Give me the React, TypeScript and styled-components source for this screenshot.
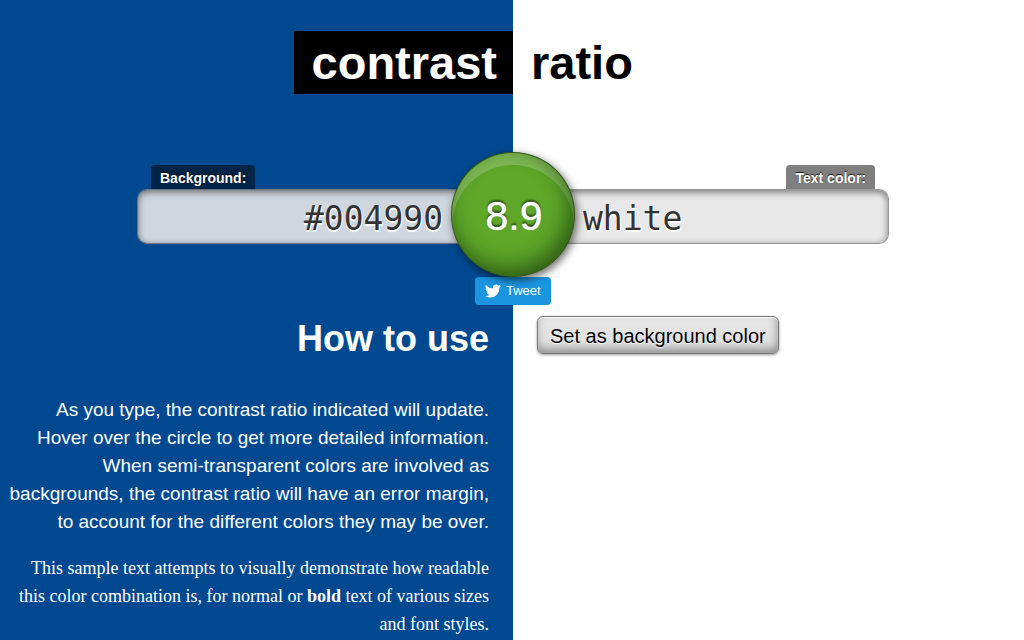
import React, { useState } from 'react';
import styled, { createGlobalStyle } from 'styled-components';

const GlobalStyle = createGlobalStyle`
  *, *::before, *::after { box-sizing: border-box; }
  body {
    margin: 0;
    font-family: "Liberation Sans", Arial, sans-serif;
    font-size: 19px;
    line-height: 28px;
  }
`;

const Page = styled.div`
  min-height: 100vh;
  padding-top: 31px;
  color: white;
  background: linear-gradient(to right, #004990 calc(50% + 1px), white 0);
`;

const band = `
  display: grid;
  grid-template-columns: calc(50% + 1px) 1fr;
`;

const Title = styled.h1`
  ${band}
  margin: 0 0 71px;
  font-size: 47px;
  line-height: 63px;
`;

const TitleWord = styled.span<{ $dark?: boolean }>`
  justify-self: ${p => (p.$dark ? 'end' : 'start')};
  padding: 0 ${p => (p.$dark ? 16 : 20)}px 0 18px;
  background: ${p => (p.$dark ? 'black' : 'transparent')};
  color: ${p => (p.$dark ? 'white' : 'black')};
`;

const Form = styled.form`
  ${band}
  position: relative;
  margin-bottom: 72px;
`;

const Field = styled.div<{ $side: 'left' | 'right' }>`
  display: flex;
  flex-direction: column;
  align-items: ${p => (p.$side === 'left' ? 'flex-start' : 'flex-end')};
  justify-self: ${p => (p.$side === 'left' ? 'end' : 'start')};
  width: 376px;
  max-width: 100%;
`;

const FieldLabel = styled.label`
  margin: 0 14px;
  padding: 2px 9px 0;
  border-radius: 4px 4px 0 0;
  background: rgba(0, 0, 0, 0.5);
  color: white;
  font-size: 14px;
  font-weight: bold;
  line-height: 22px;
  text-shadow: 0 -1px 1px rgba(0, 0, 0, 0.8);
`;

const ColorInput = styled.input<{ $side: 'left' | 'right' }>`
  width: 100%;
  height: 55px;
  padding: 4px 70px 0;
  border: 1px solid rgba(128, 128, 128, 0.8);
  border-width: ${p => (p.$side === 'left' ? '1px 0 1px 1px' : '1px 1px 1px 0')};
  border-radius: ${p => (p.$side === 'left' ? '10px 0 0 10px' : '0 10px 10px 0')};
  outline: none;
  background: hsla(0, 0%, 90%, 0.9);
  background-clip: padding-box;
  box-shadow: inset 0 2px 7px rgba(0, 0, 0, 0.5);
  color: #333;
  font: 33px "DejaVu Sans Mono", monospace;
  text-align: ${p => (p.$side === 'left' ? 'right' : 'left')};
  text-shadow: 1px 1px 1px white, 0 2px 1px white;
`;

const Ratio = styled.output`
  position: absolute;
  z-index: 2;
  top: -13px;
  left: calc(50% - 61px);
  width: 124px;
  height: 125px;
  padding: 2px 0 0 2px;
  border: 1px solid rgba(0, 0, 0, 0.45);
  border-radius: 50%;
  background: #5ea729;
  box-shadow:
    2px 3px 8px rgba(0, 0, 0, 0.6),
    inset -5px -8px 20px rgba(0, 20, 0, 0.5),
    inset 0 12px 0 rgba(255, 255, 255, 0.2);
  font-size: 41px;
  line-height: 122px;
  text-align: center;
  text-shadow: 0 0 1px white, 0 -2px 2px rgba(0, 0, 0, 0.6);
`;

const TweetLink = styled.a`
  position: absolute;
  z-index: 1;
  top: 112px;
  left: calc(50% - 37px);
  display: flex;
  align-items: center;
  gap: 5px;
  width: 76px;
  height: 28px;
  padding: 0 10px;
  border-radius: 4px;
  background: #1b95e0;
  color: white;
  font-size: 13px;
  text-decoration: none;
`;

const Columns = styled.main`
  ${band}
`;

const Instructions = styled.section`
  padding: 0 24px 0 8px;
  text-align: right;
`;

const Heading = styled.h2`
  margin: 0 0 34px;
  font-size: 36px;
  line-height: 46px;
`;

const Copy = styled.p<{ $serif?: boolean }>`
  margin: 0 0 18px;
  ${p => p.$serif && 'font-family: "Liberation Serif", "Times New Roman", serif; font-size: 18px;'}
  &:last-child { margin-bottom: 0; }
`;

const Actions = styled.section`
  padding-left: 24px;
`;

const SetButton = styled.button`
  height: 38px;
  padding: 2px 12px 0;
  border: 1px solid #777;
  border-radius: 6px;
  background: linear-gradient(#e8e8e8, #dcdcdc);
  box-shadow:
    0 1px 3px rgba(0, 0, 0, 0.4),
    inset 0 1px 1px white,
    inset -1px -4px 8px rgba(0, 0, 0, 0.35);
  color: black;
  font: 20px "Liberation Sans", Arial, sans-serif;
  text-shadow: 0 1px 1px white;
`;

const Bird = () => (
  <svg width="16" height="16" viewBox="0 0 24 24" fill="white" aria-hidden="true">
    <path d="M23.95 4.57a10 10 0 0 1-2.82.77 4.96 4.96 0 0 0 2.16-2.72c-.95.55-2 .95-3.13 1.18a4.92 4.92 0 0 0-8.38 4.48A13.93 13.93 0 0 1 1.64 3.16a4.92 4.92 0 0 0 1.52 6.57 4.9 4.9 0 0 1-2.23-.61v.06a4.92 4.92 0 0 0 3.95 4.83 5 5 0 0 1-2.21.08 4.94 4.94 0 0 0 4.6 3.42A9.87 9.87 0 0 1 0 19.54a13.99 13.99 0 0 0 7.55 2.21c9.05 0 14-7.5 14-13.98 0-.21 0-.42-.02-.63a9.94 9.94 0 0 0 2.42-2.57z" />
  </svg>
);

export default function App() {
  const [background, setBackground] = useState('#004990');
  const [color, setColor] = useState('white');

  return (
    <>
      <GlobalStyle />
      <Page>
        <Title>
          <TitleWord $dark>contrast</TitleWord>
          <TitleWord>ratio</TitleWord>
        </Title>
        <Form>
          <Field $side="left">
            <FieldLabel htmlFor="background">Background:</FieldLabel>
            <ColorInput
              id="background"
              $side="left"
              value={background}
              onChange={e => setBackground(e.target.value)}
            />
          </Field>
          <Field $side="right">
            <FieldLabel htmlFor="color">Text color:</FieldLabel>
            <ColorInput
              id="color"
              $side="right"
              value={color}
              onChange={e => setColor(e.target.value)}
            />
          </Field>
          <Ratio htmlFor="background color">8.9</Ratio>
          <TweetLink href="#tweet">
            <Bird />
            Tweet
          </TweetLink>
        </Form>
        <Columns>
          <Instructions>
            <Heading>How to use</Heading>
            <Copy>
              As you type, the contrast ratio indicated will update. Hover over the circle to get
              more detailed information. When semi-transparent colors are involved as backgrounds,
              the contrast ratio will have an error margin, to account for the different colors
              they may be over.
            </Copy>
            <Copy $serif>
              This sample text attempts to visually demonstrate how readable this color combination
              is, for normal or <strong>bold</strong> text of various sizes and font styles.
            </Copy>
          </Instructions>
          <Actions>
            <SetButton type="button">Set as background color</SetButton>
          </Actions>
        </Columns>
      </Page>
    </>
  );
}
